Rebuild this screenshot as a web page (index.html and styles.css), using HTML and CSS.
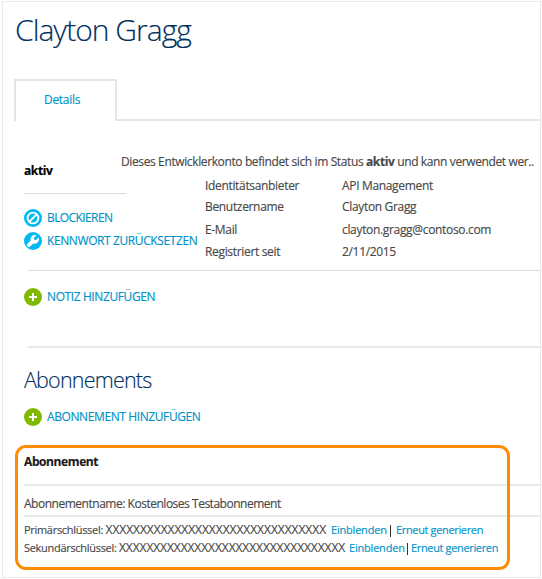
FILE: index.html
```html
<!DOCTYPE html>
<html lang="de">
<head>
<meta charset="utf-8">
<title>Clayton Gragg</title>
<link rel="stylesheet" href="styles.css">
</head>
<body>
<main class="frame">
  <h1 class="title">Clayton Gragg</h1>
  <nav class="tabs"><a class="tab">Details</a><span class="tabs-rest"></span></nav>
  <section class="account">
    <div class="side">
      <div class="status">aktiv</div>
      <a class="action">
        <svg class="icon" viewBox="0 0 18 18"><circle cx="9" cy="9" r="9" fill="#00b9f2"/><circle cx="9" cy="9" r="5.4" fill="none" stroke="#fff" stroke-width="1.9"/><path d="M5.4 12.6l7.2-7.2" stroke="#fff" stroke-width="1.9"/></svg>
        <span class="t-block">BLOCKIEREN</span>
      </a>
      <a class="action">
        <svg class="icon" viewBox="0 0 18 18"><circle cx="9" cy="9" r="9" fill="#00b9f2"/><path d="M12.5 3.3a4.4 4.4 0 0 0-5.9 5.3L3.5 11.8a1.9 1.9 0 0 0 2.7 2.7l3.2-3.1a4.4 4.4 0 0 0 5.4-5.8l-2.6 2.5-1.8-.4-.5-1.8z" fill="#fff"/></svg>
        <span class="t-reset">KENNWORT ZURÜCKSETZEN</span>
      </a>
    </div>
    <div class="info">
      <p class="message">Dieses Entwicklerkonto befindet sich im Status <b>aktiv</b> und kann verwendet wer..</p>
      <dl class="facts">
        <dt>Identitätsanbieter</dt><dd>API Management</dd>
        <dt>Benutzername</dt><dd>Clayton Gragg</dd>
        <dt>E-Mail</dt><dd>clayton.gragg@contoso.com</dd>
        <dt>Registriert seit</dt><dd>2/11/2015</dd>
      </dl>
    </div>
  </section>
  <section class="notes">
    <a class="action">
      <svg class="icon" viewBox="0 0 18 18"><circle cx="9" cy="9" r="9" fill="#7fba00"/><path d="M9 5v8M5 9h8" stroke="#fff" stroke-width="2"/></svg>
      <span class="t-note">NOTIZ HINZUFÜGEN</span>
    </a>
  </section>
  <section class="subs">
    <h2 class="heading">Abonnements</h2>
    <a class="action">
      <svg class="icon" viewBox="0 0 18 18"><circle cx="9" cy="9" r="9" fill="#7fba00"/><path d="M9 5v8M5 9h8" stroke="#fff" stroke-width="2"/></svg>
      <span class="t-add">ABONNEMENT HINZUFÜGEN</span>
    </a>
    <div class="sub">
      <div class="sub-head">Abonnement</div>
      <div class="sub-name">Abonnementname: Kostenloses Testabonnement</div>
      <div class="key first"><span class="label">Primärschlüssel:</span><span class="value">XXXXXXXXXXXXXXXXXXXXXXXXXXXXXXXX</span><a class="show">Einblenden</a><i class="bar"></i><a class="regen">Erneut generieren</a></div>
      <div class="key second"><span class="label">Sekundärschlüssel:</span><span class="value">XXXXXXXXXXXXXXXXXXXXXXXXXXXXXXXXX</span><a class="show">Einblenden</a><i class="bar"></i><a class="regen">Erneut generieren</a></div>
      <div class="highlight"></div>
    </div>
  </section>
</main>
</body>
</html>
```
FILE: styles.css
```css
* { box-sizing: border-box; margin: 0; padding: 0; }
body {
  background: #fff;
  color: #484848;
  font: 12px/20px "Open Sans", "Noto Sans", sans-serif;
  padding: 1px 1px 0 2px;
  white-space: nowrap;
  -webkit-text-stroke: 0.15px;
}
.frame { height: 577px; border: 1px solid #e9e9e9; }
.title {
  height: 77px;
  padding: 7px 0 0 12px;
  color: #00305f;
  font-size: 30px;
  font-weight: 300;
  line-height: 42px;
  letter-spacing: -0.98px;
}
.tabs { display: flex; height: 42px; padding-left: 11px; }
.tab {
  width: 103px;
  border: 2px solid #e6e6e6;
  border-bottom: 0;
  padding: 9px 0 0 28px;
  color: #0093c8;
  letter-spacing: -0.3px;
}
.tabs-rest { flex: 1; border-bottom: 2px solid #e6e6e6; }
.account { display: flex; height: 150px; margin-left: 21px; position: relative; }
.account::after {
  content: "";
  position: absolute;
  left: 4px; right: 0; bottom: 0;
  height: 1px;
  background: #dcdcdc;
}
.side { width: 97px; padding-top: 40px; }
.status {
  width: 102px;
  height: 33px;
  margin-bottom: 12px;
  border-bottom: 1px solid #dcdcdc;
  color: #000;
  font-weight: 700;
  letter-spacing: -0.4px;
}
.action {
  display: flex;
  align-items: center;
  gap: 5px;
  height: 23px;
  color: #0093c8;
  letter-spacing: -0.4px;
}
.t-block { letter-spacing: -0.6px; }
.icon { width: 18px; height: 18px; flex: none; }
.info { padding-top: 31px; }
.message { height: 24px; letter-spacing: -0.38px; }
.facts {
  display: grid;
  grid-template-columns: 137px auto;
  grid-template-rows: 21px 23px 22px 22px;
  margin-left: 84px;
  letter-spacing: -0.33px;
}
.notes {
  height: 77px;
  margin-left: 21px;
  padding-top: 14px;
  position: relative;
}
.notes::after {
  content: "";
  position: absolute;
  left: 4px; right: 0; bottom: 0;
  height: 2px;
  background: #e9e9e9;
}
.subs { padding-left: 21px; }
.heading {
  height: 57px;
  padding-top: 16px;
  color: #00305f;
  font-size: 21.5px;
  font-weight: 300;
  line-height: 32px;
  letter-spacing: -0.8px;
}
.sub { position: relative; padding-top: 24px; }
.sub-head {
  height: 34px;
  border-bottom: 2px solid #e9e9e9;
  color: #1a1a1a;
  font-weight: 700;
  letter-spacing: -0.4px;
}
.sub-name {
  height: 31px;
  padding-top: 8px;
  border-bottom: 2px solid #e9e9e9;
  letter-spacing: -0.48px;
}
.key { display: flex; height: 18px; font-size: 11px; letter-spacing: -0.2px; }
.first { margin-top: 3px; }
.label { letter-spacing: -0.3px; }
.value { font-size: 12px; letter-spacing: -0.04px; }
.first .label { width: 81.5px; }
.first .value { width: 225.5px; }
.first .show { width: 59px; }
.second .label { width: 95px; }
.second .value { width: 230px; letter-spacing: -0.08px; }
.second .show { width: 58px; }
.show { color: #0093c8; }
.bar { width: 1px; height: 12px; margin: 5px 5px 0 0; background: #333; }
.second .bar { margin-right: 3px; }
.regen { color: #0093c8; letter-spacing: -0.35px; }
.highlight {
  position: absolute;
  left: -9px; top: 17px;
  width: 495px; height: 125px;
  border: 3px solid #ff8c00;
  border-radius: 11px;
}
```
